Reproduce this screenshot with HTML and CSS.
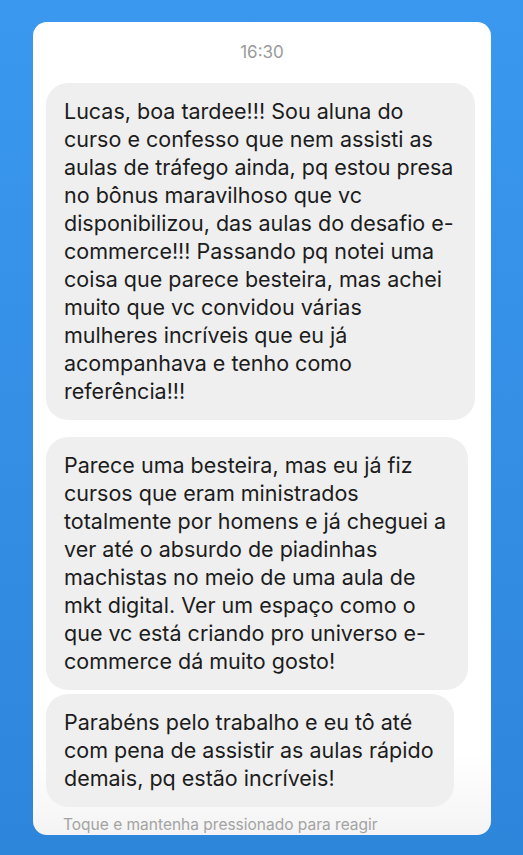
FILE: index.html
```html
<!DOCTYPE html>
<html lang="pt-BR">
<head>
  <meta charset="UTF-8" />
  <meta name="viewport" content="width=device-width, initial-scale=1.0"/>
  <title>Mensagens</title>
  <link rel="stylesheet" href="styles.css">
</head>
<body>
  <div class="card">
    <div class="time">16:30</div>

    <div class="thread">
      <div class="bubble bubble-first">
        Lucas, boa tardee!!! Sou aluna do<br>
        curso e confesso que nem assisti as<br>
        aulas de tráfego ainda, pq estou presa<br>
        no bônus maravilhoso que vc<br>
        disponibilizou, das aulas do desafio e-<br>
        commerce!!! Passando pq notei uma<br>
        coisa que parece besteira, mas achei<br>
        muito que vc convidou várias<br>
        mulheres incríveis que eu já<br>
        acompanhava e tenho como<br>
        referência!!!
      </div>

      <div class="group">
        <div class="bubble bubble-second">
          Parece uma besteira, mas eu já fiz<br>
          cursos que eram ministrados<br>
          totalmente por homens e já cheguei a<br>
          ver até o absurdo de piadinhas<br>
          machistas no meio de uma aula de<br>
          mkt digital. Ver um espaço como o<br>
          que vc está criando pro universo e-<br>
          commerce dá muito gosto!
        </div>
        <div class="bubble bubble-third">
          Parabéns pelo trabalho e eu tô até<br>
          com pena de assistir as aulas rápido<br>
          demais, pq estão incríveis!
        </div>
      </div>
    </div>

    <div class="hint">Toque e mantenha pressionado para reagir</div>
  </div>
</body>
</html>
```

FILE: styles.css
```css
body {
  margin: 0;
  height: 855px;
  background: linear-gradient(to bottom, #3a98ef, #2e86db);
  font-family: Inter, "Liberation Sans", Arial, sans-serif;
  overflow: hidden;
}

.card {
  margin: 22px 0 0 33px;
  width: 458px;
  height: 813px;
  box-sizing: border-box;
  padding: 19px 13px 0;
  background: linear-gradient(to bottom, #fff 90%, #f4f4f4);
  border-radius: 14px;
}

.time {
  text-align: center;
  font-size: 17px;
  line-height: 22px;
  color: #9a9a9a;
  margin-bottom: 20px;
}

.thread {
  display: flex;
  flex-direction: column;
  gap: 17px;
}

.group {
  display: flex;
  flex-direction: column;
  gap: 4px;
}

.bubble {
  background: #efefef;
  color: #1c1c1c;
  font-size: 21.5px;
  line-height: 28px;
  padding: 14px 18px 15px;
  border-radius: 22px;
  box-sizing: border-box;
}

.bubble-first {
  width: 429px;
}

.bubble-second {
  width: 422px;
}

.bubble-third {
  width: 408px;
}

.hint {
  margin-top: 8px;
  padding-left: 17px;
  font-size: 15.5px;
  line-height: 20px;
  color: #a3a3a3;
}
```
